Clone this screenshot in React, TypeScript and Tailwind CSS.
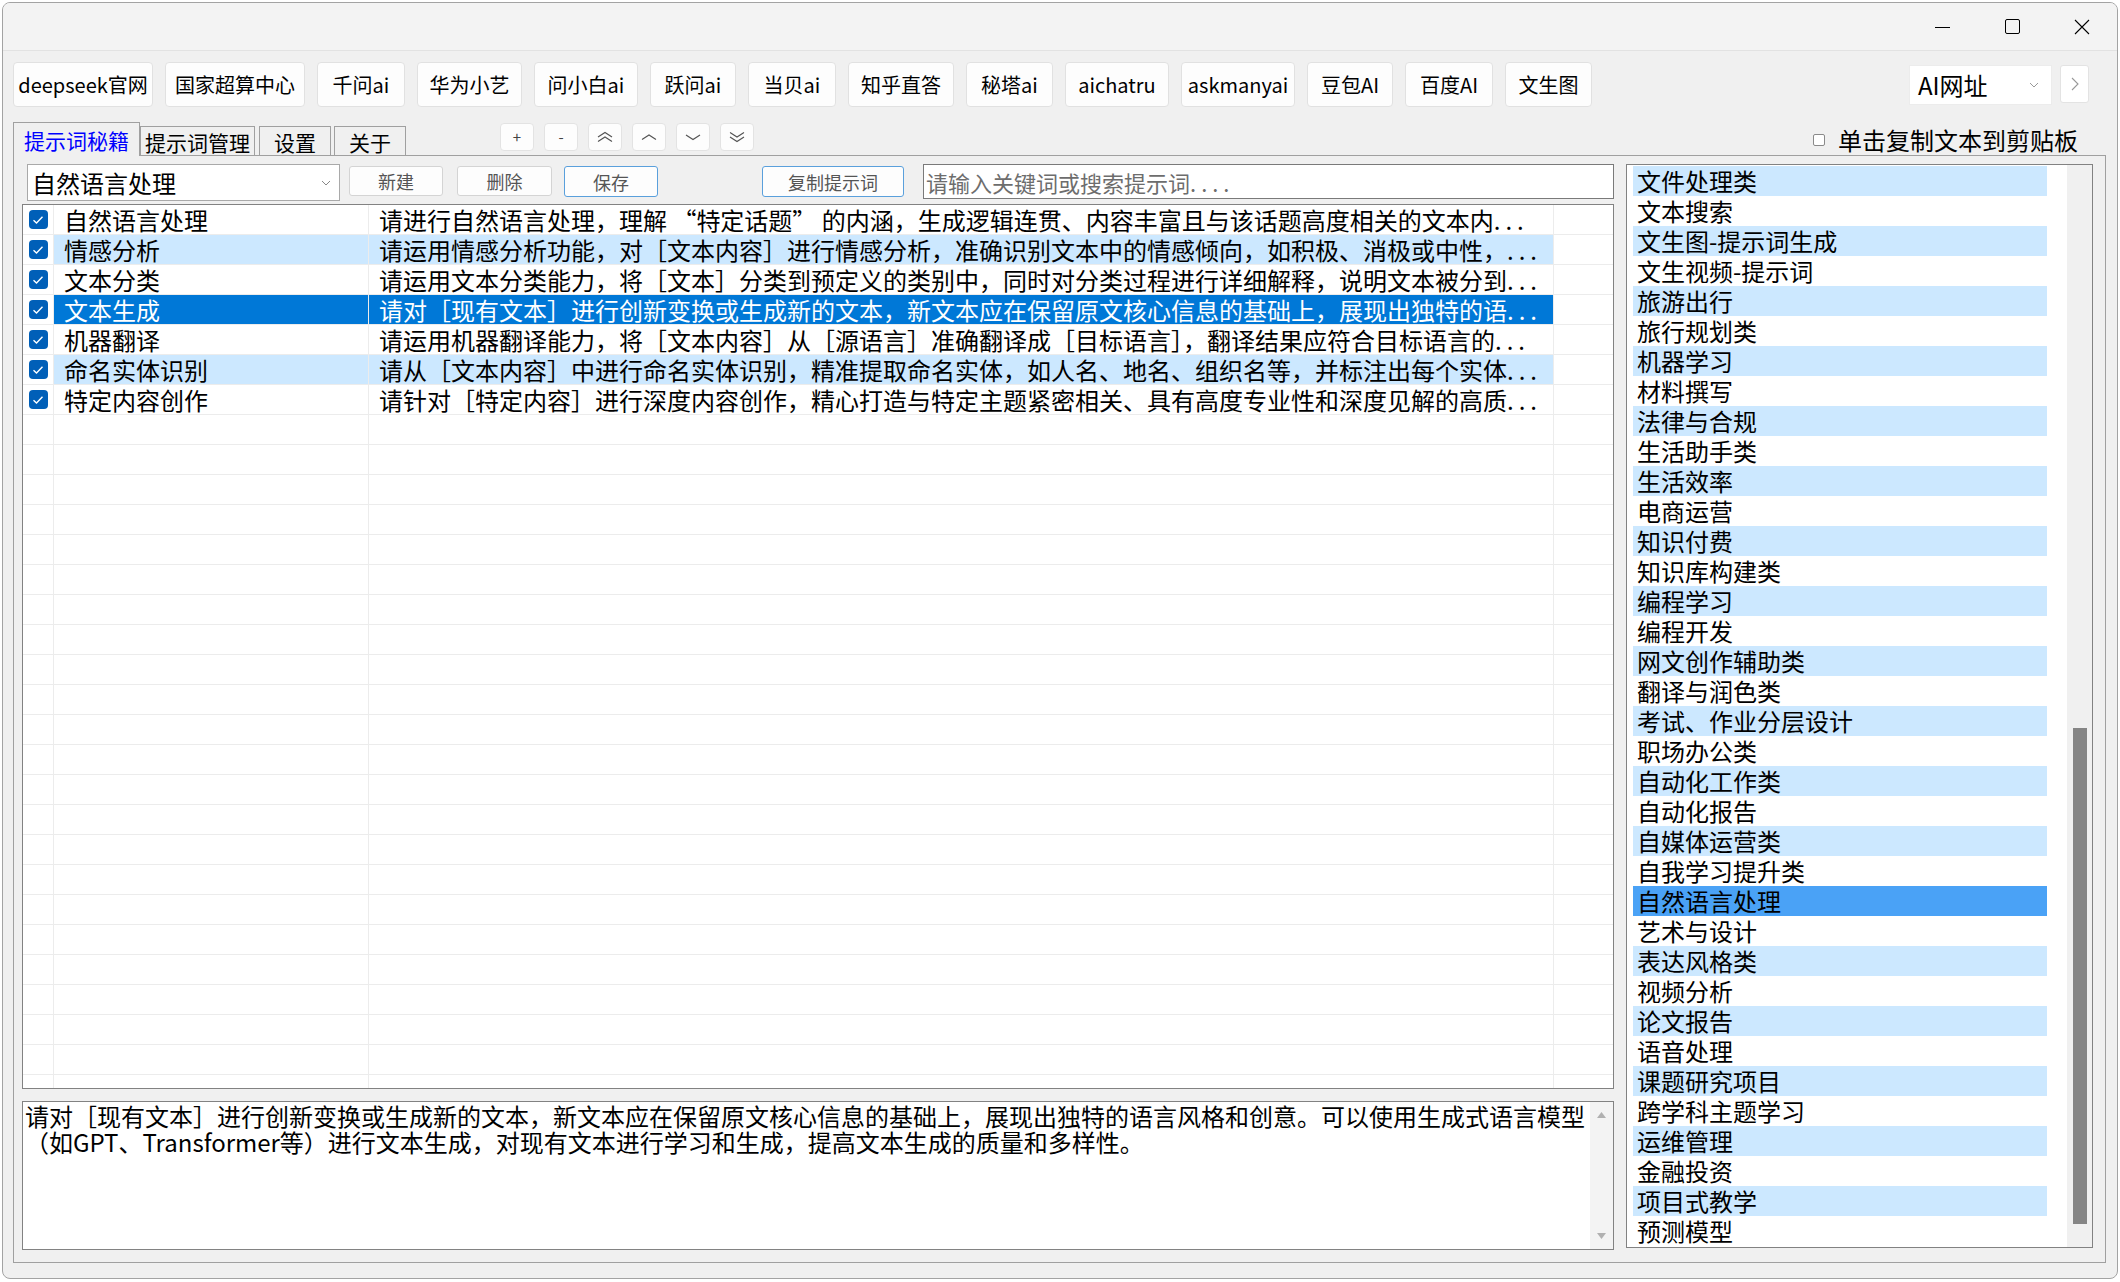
import React from 'react';

const sites = [
  { label: 'deepseek官网', w: 'w-[140px]' },
  { label: '国家超算中心', w: 'w-[140px]' },
  { label: '千问ai', w: 'w-[88px]' },
  { label: '华为小艺', w: 'w-[105px]' },
  { label: '问小白ai', w: 'w-[104px]' },
  { label: '跃问ai', w: 'w-[86px]' },
  { label: '当贝ai', w: 'w-[88px]' },
  { label: '知乎直答', w: 'w-[106px]' },
  { label: '秘塔ai', w: 'w-[87px]' },
  { label: 'aichatru', w: 'w-[104px]' },
  { label: 'askmanyai', w: 'w-[114px]' },
  { label: '豆包AI', w: 'w-[86px]' },
  { label: '百度AI', w: 'w-[88px]' },
  { label: '文生图', w: 'w-[87px]' },
];

const prompts = [
  { name: '自然语言处理', text: '请进行自然语言处理，理解 “特定话题” 的内涵，生成逻辑连贯、内容丰富且与该话题高度相关的文本内', tone: 'plain' },
  { name: '情感分析', text: '请运用情感分析功能，对［文本内容］进行情感分析，准确识别文本中的情感倾向，如积极、消极或中性，', tone: 'alt' },
  { name: '文本分类', text: '请运用文本分类能力，将［文本］分类到预定义的类别中，同时对分类过程进行详细解释，说明文本被分到', tone: 'plain' },
  { name: '文本生成', text: '请对［现有文本］进行创新变换或生成新的文本，新文本应在保留原文核心信息的基础上，展现出独特的语', tone: 'selected' },
  { name: '机器翻译', text: '请运用机器翻译能力，将［文本内容］从［源语言］准确翻译成［目标语言］，翻译结果应符合目标语言的', tone: 'plain' },
  { name: '命名实体识别', text: '请从［文本内容］中进行命名实体识别，精准提取命名实体，如人名、地名、组织名等，并标注出每个实体', tone: 'alt' },
  { name: '特定内容创作', text: '请针对［特定内容］进行深度内容创作，精心打造与特定主题紧密相关、具有高度专业性和深度见解的高质', tone: 'plain' },
];

const categories = [
  '文件处理类', '文本搜索', '文生图-提示词生成', '文生视频-提示词', '旅游出行', '旅行规划类',
  '机器学习', '材料撰写', '法律与合规', '生活助手类', '生活效率', '电商运营',
  '知识付费', '知识库构建类', '编程学习', '编程开发', '网文创作辅助类', '翻译与润色类',
  '考试、作业分层设计', '职场办公类', '自动化工作类', '自动化报告', '自媒体运营类', '自我学习提升类',
  '自然语言处理', '艺术与设计', '表达风格类', '视频分析', '论文报告', '语音处理',
  '课题研究项目', '跨学科主题学习', '运维管理', '金融投资', '项目式教学', '预测模型',
];

function Chev({ d }: { d: string }) {
  return (
    <svg width="18" height="12" viewBox="0 0 18 12" fill="none" stroke="#555" strokeWidth="1.2">
      <path d={d} />
    </svg>
  );
}

function CheckMark() {
  return (
    <div className="flex h-[19px] w-[19px] items-center justify-center rounded-[4px] bg-[#005fb8]">
      <svg width="12" height="10" viewBox="0 0 12 10" fill="none" stroke="white" strokeWidth="1.4">
        <path d="M1.5 5.2 4.5 8 10.5 1.8" />
      </svg>
    </div>
  );
}

export default function App() {
  // 7 filled rows + 22 empty ones fill the grid without clipping
  const emptyRows = Array.from({ length: 22 });

  return (
    <div className="h-[1282px] w-[2120px] bg-white px-[2px] pt-[2px] pb-[3px] font-['Noto_Sans_CJK_SC','Noto_Sans',sans-serif] text-black">
      <div className="flex h-full flex-col overflow-hidden rounded-[8px] border border-[#a3a3a3] bg-[#f0f0f0]">
        {/* title bar */}
        <div className="flex h-[48px] shrink-0 justify-end border-b border-[#e2e2e2] bg-[#f3f3f3]">
          <div className="flex w-[70px] items-center justify-center">
            <div className="mt-[2px] h-px w-[15px] bg-black" />
          </div>
          <div className="flex w-[70px] items-center justify-center">
            <div className="h-[15px] w-[15px] rounded-[2px] border border-black" />
          </div>
          <div className="flex w-[70px] items-center justify-center">
            <svg width="16" height="16" viewBox="0 0 16 16" stroke="black" strokeWidth="1.1">
              <path d="M1 1 15 15M15 1 1 15" />
            </svg>
          </div>
        </div>

        {/* site buttons */}
        <div className="mt-[11px] flex h-[45px] shrink-0 pl-[10px]">
          <div className="flex gap-[12px]">
            {sites.map((s) => (
              <div
                key={s.label}
                className={`${s.w} flex h-[45px] items-center justify-center rounded-[4px] border border-[#e1e1e1] bg-[#fdfdfd] text-[20px] leading-[24px]`}
              >
                {s.label}
              </div>
            ))}
          </div>
          <div className="mt-[3px] mr-[28px] ml-auto flex gap-[8px]">
            <div className="flex h-[40px] w-[143px] items-center border border-[#ececec] bg-white pr-[12px] pl-[8px] text-[24px] leading-[28px]">
              <span>AI网址</span>
              <svg className="ml-auto" width="10" height="6" viewBox="0 0 10 6" fill="none" stroke="#999" strokeWidth="1">
                <path d="M1 1 5 5 9 1" />
              </svg>
            </div>
            <div className="flex h-[38px] w-[29px] items-center justify-center rounded-[3px] border border-[#e3e3e3] bg-white">
              <svg width="8" height="14" viewBox="0 0 8 14" fill="none" stroke="#999" strokeWidth="1.1">
                <path d="M1 1 7 7 1 13" />
              </svg>
            </div>
          </div>
        </div>

        {/* tabs + order buttons + clipboard option */}
        <div className="flex h-[49px] shrink-0 items-start">
          <div className="ml-[10px] flex items-end self-end">
            <div className="relative z-10 flex h-[34px] w-[127px] items-center justify-center border border-b-0 border-[#a0a0a0] bg-[#f0f0f0] text-[21px] leading-[26px] text-[#0000ff]">
              提示词秘籍
            </div>
            <div className="flex h-[30px] w-[115px] items-center justify-center border border-b-0 border-[#a0a0a0] text-[21px] leading-[26px]">
              提示词管理
            </div>
            <div className="ml-[4px] flex h-[30px] w-[72px] items-center justify-center border border-b-0 border-[#a0a0a0] text-[21px] leading-[26px]">
              设置
            </div>
            <div className="ml-[3px] flex h-[30px] w-[72px] items-center justify-center border border-b-0 border-[#a0a0a0] text-[21px] leading-[26px]">
              关于
            </div>
          </div>

          <div className="mt-[16px] ml-[94px] flex gap-[10px]">
            <div className="flex h-[28px] w-[34px] items-center justify-center rounded-[4px] border border-[#e3e3e3] bg-[#fdfdfd] text-[15px] leading-[18px] text-[#444]">+</div>
            <div className="flex h-[28px] w-[34px] items-center justify-center rounded-[4px] border border-[#e3e3e3] bg-[#fdfdfd] text-[15px] leading-[18px] text-[#444]">-</div>
            <div className="flex h-[28px] w-[34px] items-center justify-center rounded-[4px] border border-[#e3e3e3] bg-[#fdfdfd]">
              <Chev d="M2 6 9 1.5 16 6M2 10.5 9 6 16 10.5" />
            </div>
            <div className="flex h-[28px] w-[34px] items-center justify-center rounded-[4px] border border-[#e3e3e3] bg-[#fdfdfd]">
              <Chev d="M2 8.5 9 4 16 8.5" />
            </div>
            <div className="flex h-[28px] w-[34px] items-center justify-center rounded-[4px] border border-[#e3e3e3] bg-[#fdfdfd]">
              <Chev d="M2 4 9 8.5 16 4" />
            </div>
            <div className="flex h-[28px] w-[34px] items-center justify-center rounded-[4px] border border-[#e3e3e3] bg-[#fdfdfd]">
              <Chev d="M2 1.5 9 6 16 1.5M2 6 9 10.5 16 6" />
            </div>
          </div>

          <div className="mt-[18px] mr-[39px] ml-auto flex h-[30px] items-center">
            <div className="h-[12px] w-[12px] rounded-[2px] border border-[#8a8a8a] bg-white" />
            <span className="ml-[13px] text-[24px] leading-[30px]">单击复制文本到剪贴板</span>
          </div>
        </div>

        {/* tab page */}
        <div className="-mt-px mr-[11px] ml-[10px] flex h-[1108px] shrink-0 border border-[#a0a0a0] pt-[8px] pr-[12px] pl-[8px]">
          {/* left column */}
          <div className="flex w-[1592px] flex-col">
            <div className="flex h-[37px] items-start">
              <div className="ml-[5px] flex h-[37px] w-[313px] items-center border border-[#a9a9a9] bg-white pr-[8px] pl-[4px] text-[24px] leading-[30px]">
                <span>自然语言处理</span>
                <svg className="ml-auto" width="10" height="6" viewBox="0 0 10 6" fill="none" stroke="#888" strokeWidth="1">
                  <path d="M1 1 5 5 9 1" />
                </svg>
              </div>
              <div className="mt-[2px] ml-[9px] flex h-[30px] w-[94px] items-center justify-center rounded-[3px] border border-[#d4d4d4] bg-[#fdfdfd] text-[18px] leading-[22px] text-[#555]">新建</div>
              <div className="mt-[2px] ml-[14px] flex h-[30px] w-[95px] items-center justify-center rounded-[3px] border border-[#d4d4d4] bg-[#fdfdfd] text-[18px] leading-[22px] text-[#555]">删除</div>
              <div className="mt-[2px] ml-[12px] flex h-[31px] w-[94px] items-center justify-center rounded-[3px] border border-[#5aa0dc] bg-[#fdfdfd] text-[18px] leading-[22px] text-[#555]">保存</div>
              <div className="mt-[2px] ml-[104px] flex h-[31px] w-[142px] items-center justify-center rounded-[3px] border border-[#5aa0dc] bg-[#fdfdfd] text-[18px] leading-[22px] text-[#555]">复制提示词</div>
              <div className="ml-[19px] flex h-[35px] flex-1 items-center border border-[#7a7a7a] bg-white pl-[2px] text-[22px] leading-[28px] text-[#6d6d6d]">
                请输入关键词或搜索提示词<span className="tracking-[5px]">....</span>
              </div>
            </div>

            {/* prompt grid */}
            <div className="mt-[3px] h-[885px] border border-[#828282] bg-white">
              {prompts.map((p) => {
                const tone =
                  p.tone === 'selected'
                    ? 'bg-[#0078d7] text-white'
                    : p.tone === 'alt'
                    ? 'bg-[#cce8ff]'
                    : 'bg-white';
                return (
                  <div key={p.name} className="flex h-[30px] border-b border-[#ececec] text-[24px] leading-[29px]">
                    <div className="flex w-[31px] items-center justify-center border-r border-[#ececec]">
                      <CheckMark />
                    </div>
                    <div className={`w-[315px] border-r border-[#ececec] pl-[10px] whitespace-nowrap ${tone}`}>{p.name}</div>
                    <div className={`w-[1185px] border-r border-[#ececec] pl-[10px] whitespace-nowrap ${tone}`}>
                      {p.text}
                      <span className="tracking-[5px]">...</span>
                    </div>
                    <div className="flex-1" />
                  </div>
                );
              })}
              {emptyRows.map((_, i) => (
                <div key={i} className="flex h-[30px] border-b border-[#ececec]">
                  <div className="w-[31px] border-r border-[#ececec]" />
                  <div className="w-[315px] border-r border-[#ececec]" />
                  <div className="w-[1185px] border-r border-[#ececec]" />
                  <div className="flex-1" />
                </div>
              ))}
              <div className="flex h-[13px]">
                <div className="w-[31px] border-r border-[#ececec]" />
                <div className="w-[315px] border-r border-[#ececec]" />
                <div className="w-[1185px] border-r border-[#ececec]" />
              </div>
            </div>

            {/* description */}
            <div className="mt-[12px] flex h-[149px] border border-[#828282] bg-white">
              <div className="flex-1 pt-[1px] pl-[2px] text-[24px] leading-[26px]">
                <div className="whitespace-nowrap">请对［现有文本］进行创新变换或生成新的文本，新文本应在保留原文核心信息的基础上，展现出独特的语言风格和创意。可以使用生成式语言模型</div>
                <div className="whitespace-nowrap">（如GPT、Transformer等）进行文本生成，对现有文本进行学习和生成，提高文本生成的质量和多样性。</div>
              </div>
              <div className="flex w-[23px] flex-col items-center justify-between bg-[#f3f3f3] py-[10px]">
                <svg width="9" height="6" viewBox="0 0 9 6" fill="#b0b0b0">
                  <path d="M4.5 0 9 6H0Z" />
                </svg>
                <svg width="9" height="6" viewBox="0 0 9 6" fill="#b0b0b0">
                  <path d="M0 0H9L4.5 6Z" />
                </svg>
              </div>
            </div>
          </div>

          {/* category list */}
          <div className="ml-[12px] flex h-[1084px] w-[467px] border border-[#828282] bg-white">
            <div className="ml-[6px] flex w-[414px] flex-col pt-[1px]">
              {categories.map((c, i) => {
                const bg =
                  c === '自然语言处理' ? 'bg-[#4aa2f6]' : i % 2 === 0 ? 'bg-[#cce8ff]' : 'bg-white';
                return (
                  <div key={c} className={`h-[30px] pl-[4px] text-[24px] leading-[30px] whitespace-nowrap ${bg}`}>
                    {c}
                  </div>
                );
              })}
            </div>
            <div className="flex-1" />
            <div className="flex w-[25px] flex-col items-center bg-[#f0f0f0]">
              <div className="mt-[563px] h-[496px] w-[14px] bg-[#858585]" />
            </div>
          </div>
        </div>
      </div>
    </div>
  );
}
